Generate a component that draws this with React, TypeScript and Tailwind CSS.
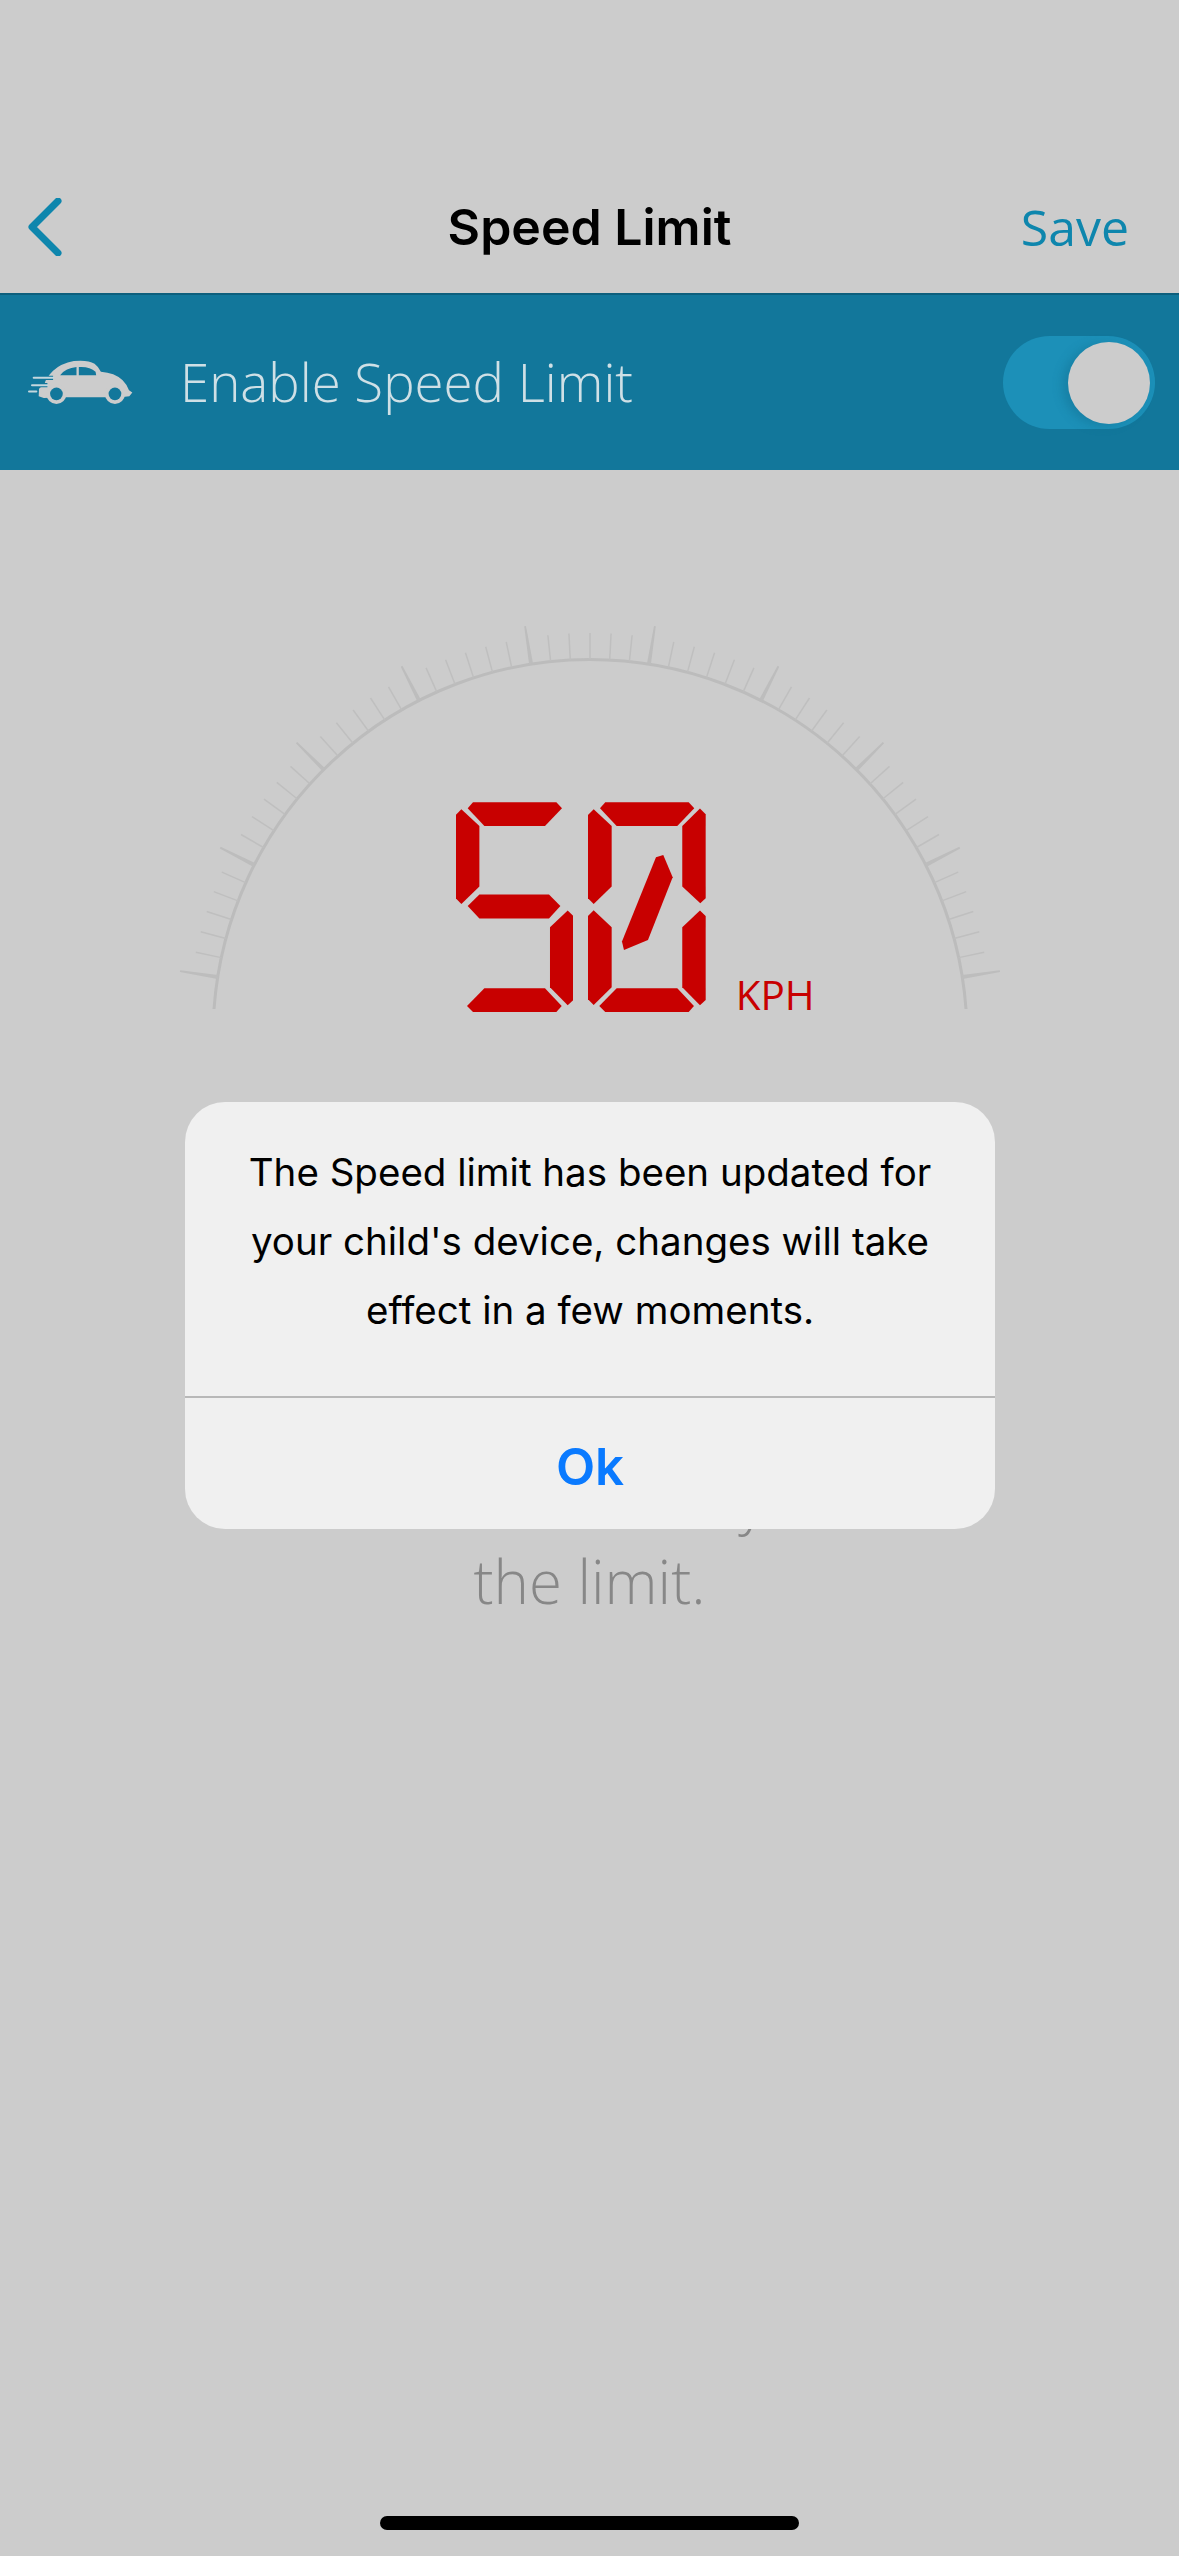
import React from 'react';

const SEGMENTS: Record<string, string> = {
  a: '[clip-path:polygon(12px_6px,17.3px_0px,100.7px_0px,106.3px_6px,89.3px_23.7px,28.7px_23.7px)]',
  b: '[clip-path:polygon(112px_6.3px,117.7px_12px,117.7px_96px,112.3px_101px,94.3px_84.3px,94.3px_23.7px)]',
  c: '[clip-path:polygon(112px_108.3px,117.7px_113.7px,117.7px_197.7px,112px_203px,94.3px_185px,94.3px_125px)]',
  d: '[clip-path:polygon(11.3px_203.7px,28.7px_186px,89.3px_186px,106px_203.7px,100.7px_209.7px,17.3px_209.7px)]',
  e: '[clip-path:polygon(5.7px_108px,0px_113.7px,0px_197px,5.7px_202.7px,23.7px_185px,23.7px_125px)]',
  f: '[clip-path:polygon(5.7px_7px,0px_12.7px,0px_96px,5.7px_101.7px,23.7px_84.3px,23.7px_23.7px)]',
  g: '[clip-path:polygon(12px_103.7px,23.7px_92.3px,93.3px_92.3px,104.7px_103.7px,93.3px_116.3px,23.7px_116.3px)]',
  slash: '[clip-path:polygon(68px_55px,75.3px_52.7px,84.7px_75px,60px_137.7px,36px_147.7px,34px_139.3px)]',
};

const DIGITS: Record<string, string[]> = {
  '5': ['a', 'f', 'g', 'c', 'd'],
  '0': ['a', 'b', 'c', 'd', 'e', 'f', 'slash'],
};

function SegmentDigit({ value }: { value: string }) {
  return (
    <div className="relative w-[117.7px] h-[209.7px]">
      {DIGITS[value].map((s) => (
        <div key={s} className={`absolute inset-0 bg-[#c80000] ${SEGMENTS[s]}`} />
      ))}
    </div>
  );
}

function Gauge() {
  const cx = 420;
  const cy = 416;
  const r = 377;
  const ticks = [];
  for (let deg = 9; deg <= 171; deg += 3) {
    const a = (deg * Math.PI) / 180;
    const dx = -Math.cos(a);
    const dy = -Math.sin(a);
    if ((deg - 9) % 18 === 0) {
      // major ticks get thinner towards the outside
      const px = -dy;
      const py = dx;
      const pts = [
        [r, 2],
        [415, 0.9],
        [415, -0.9],
        [r, -2],
      ]
        .map(([d, w]) => `${cx + dx * d + px * w},${cy + dy * d + py * w}`)
        .join(' ');
      ticks.push(<polygon key={deg} points={pts} fill="#bdbdbd" />);
    } else {
      ticks.push(
        <line
          key={deg}
          x1={cx + dx * r}
          y1={cy + dy * r}
          x2={cx + dx * 403}
          y2={cy + dy * 403}
          stroke="#bfbfbf"
          strokeWidth={1.5}
        />
      );
    }
  }
  return (
    <svg width="840" height="400" viewBox="0 0 840 400" fill="none">
      <path d="M44 389 A377 377 0 0 1 796 389" stroke="#bcbcbc" strokeWidth="3" />
      {ticks}
    </svg>
  );
}

function Car() {
  return (
    <svg width="107" height="47" viewBox="80 115 320 140" fill="none">
      <path
        d="M115 226 L116 204 Q122 196 132 190 Q136 172 158 150 Q182 128 220 121 Q262 117 282 129 Q294 138 301 153 Q342 156 366 178 Q380 192 385 208 L395 215 L386 226 L360 229 L190 229 L130 231 Z"
        fill="#cccccc"
      />
      <path d="M179 163 Q196 142 228 139 L228 163 Z M235 139 Q268 137 285 153 L287 163 L235 163 Z" fill="#12779b" />
      <circle cx="168" cy="219" r="30" fill="#cccccc" />
      <circle cx="343" cy="219" r="30" fill="#cccccc" />
      <circle cx="168" cy="219" r="19" fill="#12779b" />
      <circle cx="343" cy="219" r="19" fill="#12779b" />
      <path d="M100 171 H158 M95 193 H141 M86 212 H108" stroke="#12779b" strokeWidth="13" />
      <path d="M100 171 H158 M95 193 H141 M86 212 H108" stroke="#c4d7de" strokeWidth="6" strokeLinecap="round" />
    </svg>
  );
}

export default function App() {
  return (
    <div className="relative w-[1179px] h-[2556px] overflow-hidden bg-[#cccccc] font-['Open_Sans',sans-serif]">
      <header className="h-[293px] pt-[161px] px-[28px] grid grid-cols-[1fr_auto_1fr] items-center">
        <svg width="34" height="58" viewBox="0 0 34 58" fill="none">
          <path d="M30 3 L4 29 L30 55" stroke="#0e86ad" strokeWidth="7" strokeLinecap="round" strokeLinejoin="round" />
        </svg>
        <h1 className="font-['Inter',sans-serif] font-semibold text-[50px] leading-none text-black">Speed Limit</h1>
        <button className="justify-self-end mr-[22px] text-[50px] leading-none text-[#0e86ad]">Save</button>
      </header>

      <section className="h-[177px] bg-[#12779b] border-t-2 border-[#0d5f7d] pl-[27px] pr-[24px] flex items-center">
        <Car />
        <span className="ml-[46px] flex-1 font-light text-[52.8px] leading-none text-[#cfe0e6]">Enable Speed Limit</span>
        <div className="w-[152px] h-[93px] rounded-full bg-[#1c90b8] flex items-center justify-end pr-[5px]">
          <div className="w-[82px] h-[82px] rounded-full bg-[#cccccc] shadow-[-6px_2px_10px_rgba(18,110,145,0.45)]" />
        </div>
      </section>

      <section className="relative w-[840px] h-[400px] mt-[150px] ml-[170px]">
        <Gauge />
        <div className="absolute left-[285.7px] top-[182.3px] flex items-end" aria-label="50">
          <SegmentDigit value="5" />
          <div className="ml-[14.6px]">
            <SegmentDigit value="0" />
          </div>
          <span className="ml-[30px] mb-[-6px] text-[40.5px] leading-[46px] text-[#c80000]">KPH</span>
        </div>
      </section>

      <p className="mt-[440px] text-center font-light text-[60px] leading-[81px] text-[#878787]">
        or when they
        <br />
        the limit.
      </p>

      <div className="absolute left-[380px] bottom-[26px] w-[419px] h-[14px] rounded-full bg-black" />

      <div className="absolute left-[185px] top-[1102px] w-[810px] h-[427px] rounded-[40px] bg-[#f0f0f0] flex flex-col font-['Inter',sans-serif]">
        <div className="h-[294px] pt-[36px] px-[40px] text-center text-[38.5px] leading-[69px] text-black">
          The Speed limit has been updated for your child's device, changes will take effect in a few moments.
        </div>
        <div className="h-[2px] bg-[#b8b8b8]" />
        <button className="flex-1 pt-[5px] flex items-center justify-center font-semibold text-[51px] leading-none text-[#0a7aff]">Ok</button>
      </div>
    </div>
  );
}
